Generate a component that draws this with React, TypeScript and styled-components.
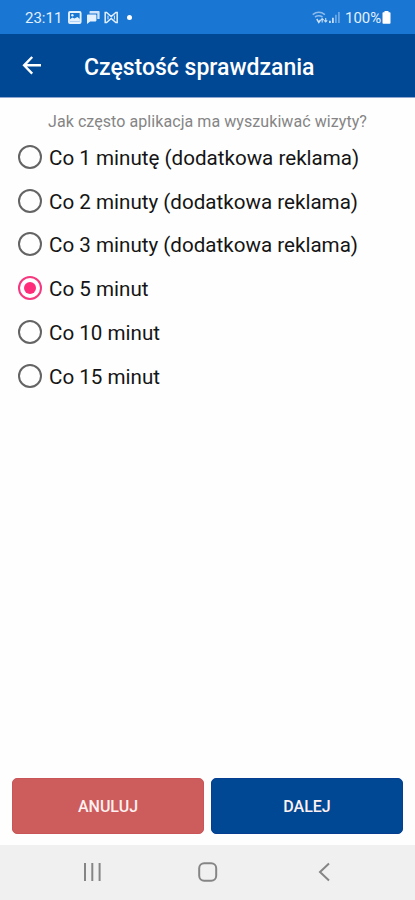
import React, { useState } from "react";
import styled, { createGlobalStyle } from "styled-components";

const GlobalStyle = createGlobalStyle`
  * { box-sizing: border-box; }
  body { margin: 0; background: #fff; font-family: Roboto, sans-serif; }
`;

const Screen = styled.div`
  display: flex;
  flex-direction: column;
  width: 415px;
  height: 900px;
  overflow: hidden;
  background: #fefefe;
`;

const StatusBar = styled.div`
  display: flex;
  align-items: center;
  justify-content: space-between;
  height: 34px;
  flex: none;
  padding: 1px 24px 0 25px;
  background: #1976d2;
  color: #e2f0ff;
  font-size: 15px;
`;

const StatusGroup = styled.div`
  display: flex;
  align-items: center;
  height: 100%;
`;

const StatusText = styled.span<{ $width: number }>`
  width: ${(p) => p.$width}px;
  white-space: nowrap;
  line-height: 18px;
`;

const StatusIcons = styled.div`
  display: flex;
  align-items: center;
  gap: 4px;
`;

const NoticeDot = styled.span`
  width: 5px;
  height: 5px;
  margin-left: 4px;
  border-radius: 50%;
  background: #fff;
`;

const AppBar = styled.header`
  display: flex;
  align-items: center;
  height: 64px;
  flex: none;
  padding: 0 0 1px 20px;
  background: #004794;
  border-bottom: 1px solid #8ea6d0;
  color: #fff;
`;

const BackButton = styled.button`
  display: flex;
  width: 24px;
  height: 24px;
  margin-right: 40px;
  padding: 0;
  border: 0;
  background: none;
  color: inherit;
`;

const Title = styled.h1`
  margin: 6px 0 0;
  font-size: 23px;
  font-weight: 500;
  line-height: 32px;
  white-space: nowrap;
`;

const Content = styled.main`
  flex: 1;
`;

const Question = styled.p`
  margin: 13px 0 0;
  text-align: center;
  color: #858585;
  font-size: 16px;
  line-height: 22px;
  letter-spacing: 0.07px;
  white-space: nowrap;
`;

const Options = styled.div`
  display: flex;
  flex-direction: column;
  margin-top: 2px;
  padding-left: 18px;
`;

const Option = styled.button`
  display: flex;
  align-items: center;
  gap: 7px;
  height: 43.8px;
  padding: 0;
  border: 0;
  background: none;
  color: #151515;
  font: 400 20.6px/28px Roboto, sans-serif;
  white-space: nowrap;
  text-align: left;
`;

const OptionLabel = styled.span`
  padding-top: 2px;
`;

const Radio = styled.span<{ $checked: boolean }>`
  display: flex;
  align-items: center;
  justify-content: center;
  width: 24px;
  height: 24px;
  border: 2px solid ${(p) => (p.$checked ? "#f5387f" : "#646464")};
  border-radius: 50%;

  &::after {
    content: "";
    width: 12px;
    height: 12px;
    border-radius: 50%;
    background: ${(p) => (p.$checked ? "#ff2b7b" : "transparent")};
  }
`;

const Actions = styled.div`
  display: flex;
  gap: 7px;
  flex: none;
  padding: 0 12px 11px;
`;

const ActionButton = styled.button<{ $color: string; $edge: string }>`
  flex: 1;
  height: 56px;
  padding: 2px 0 0;
  border: 1px solid ${(p) => p.$edge};
  border-radius: 5px;
  background: ${(p) => p.$color};
  color: #fff1f1;
  font: 500 16px/20px Roboto, sans-serif;
`;

const NavBar = styled.nav`
  display: flex;
  flex: none;
  justify-content: space-between;
  height: 55px;
  padding: 15px 79px 0 80px;
  background: #f0f0f0;
  color: #858585;
`;

const PictureIcon = () => (
  <svg width="14" height="13" viewBox="0 0 14 13">
    <rect x="1" y="1" width="11.6" height="11" rx="1" fill="#1976d2" stroke="currentColor" strokeWidth="1.9" />
    <path d="M2 10.8V8.2l2.4-1.8 2 1.2 3-1.5 2.5 2v2.7Z" fill="currentColor" />
    <circle cx="4.4" cy="4.2" r="1.2" fill="currentColor" />
  </svg>
);

const MessagesIcon = () => (
  <svg width="14" height="13" viewBox="0 0 14 13">
    <path d="M4.2 0h8.6q.8 0 .8.8V8h-2.3V2.5H3.5V.8Q3.5 0 4.2 0Z" fill="currentColor" opacity=".9" />
    <path d="M2 3.4h7.6q.8 0 .8.8v5.4q0 .8-.8.8H4.2L1 12.9V4.2q0-.8 1-.8Z" fill="currentColor" />
  </svg>
);

const BowIcon = () => (
  <svg width="15" height="13" viewBox="0 0 15 13" fill="none" stroke="currentColor">
    <path d="M1.2 1.5v10h1.4l4.6-4 4.6 4h1.4v-10h-1.4l-4.6 4-4.6-4Z" strokeWidth="1.5" />
    <path d="M4 4.6v3.8M10.4 4.6v3.8" strokeWidth="1" />
  </svg>
);

const WifiIcon = () => (
  <svg width="16" height="13" viewBox="0 0 16 13" fill="none" stroke="currentColor">
    <path d="M.7 3.6Q6.8-1 12.9 3.6M3 6q3.8-2.6 7.5 0" strokeWidth="1.6" opacity=".58" />
    <path d="m4.8 8 2 3.3L8.5 9" strokeWidth="1.5" opacity=".9" />
    <path d="M10.2 11.5v-4m-1.5 1.6 1.5-1.6 1.5 1.6M13.7 7v4m-1.5-1.6 1.5 1.6 1.5-1.6" strokeWidth="1.1" opacity=".85" />
  </svg>
);

const SignalIcon = () => (
  <svg width="17" height="13" viewBox="0 0 17 13" fill="currentColor">
    <path d="M1 12V9.7h1.8V12ZM4 12V6.8h1.8V12Z" opacity=".85" />
    <path d="M7 12V3.7h1.8V12ZM10 12V.9h1.8V12Z" opacity=".4" />
  </svg>
);

const BatteryIcon = () => (
  <svg width="9" height="13" viewBox="0 0 9 13">
    <path d="M2.5 0h4v1.2h1.2q.8 0 .8.8v10q0 .8-.8.8H1.3q-.8 0-.8-.8V2q0-.8.8-.8h1.2Z" fill="#fff" />
  </svg>
);

const choices = [
  "Co 1 minutę (dodatkowa reklama)",
  "Co 2 minuty (dodatkowa reklama)",
  "Co 3 minuty (dodatkowa reklama)",
  "Co 5 minut",
  "Co 10 minut",
  "Co 15 minut",
];

export default function App() {
  const [selected, setSelected] = useState(3);
  return (
    <Screen>
      <GlobalStyle />
      <StatusBar>
        <StatusGroup>
          <StatusText $width={43}>23:11</StatusText>
          <StatusIcons>
            <PictureIcon />
            <MessagesIcon />
            <BowIcon />
            <NoticeDot />
          </StatusIcons>
        </StatusGroup>
        <StatusGroup>
          <WifiIcon />
          <SignalIcon />
          <StatusText $width={37}>100%</StatusText>
          <BatteryIcon />
        </StatusGroup>
      </StatusBar>
      <AppBar>
        <BackButton aria-label="Wstecz">
          <svg width="24" height="24" viewBox="0 0 24 24" fill="none" stroke="currentColor" strokeWidth="2.4">
            <path d="M21 12.3H4.5M12.2 4 4.1 12.3l8.1 8.3" />
          </svg>
        </BackButton>
        <Title>Częstość sprawdzania</Title>
      </AppBar>
      <Content>
        <Question>Jak często aplikacja ma wyszukiwać wizyty?</Question>
        <Options role="radiogroup">
          {choices.map((label, i) => (
            <Option key={label} role="radio" aria-checked={selected === i} onClick={() => setSelected(i)}>
              <Radio $checked={selected === i} />
              <OptionLabel>{label}</OptionLabel>
            </Option>
          ))}
        </Options>
      </Content>
      <Actions>
        <ActionButton $color="#cd5c5c" $edge="#c95558">ANULUJ</ActionButton>
        <ActionButton $color="#004794" $edge="#063f91">DALEJ</ActionButton>
      </Actions>
      <NavBar>
        <svg width="24" height="24" viewBox="0 0 24 24" fill="none" stroke="currentColor" strokeWidth="2">
          <path d="M5 3v18M12.3 3v18M19.6 3v18" />
        </svg>
        <svg width="24" height="24" viewBox="0 0 24 24" fill="none" stroke="currentColor" strokeWidth="2">
          <rect x="3.2" y="3.2" width="17" height="17.5" rx="5" />
        </svg>
        <svg width="24" height="24" viewBox="0 0 24 24" fill="none" stroke="currentColor" strokeWidth="2">
          <path d="m17 3.5-9 8.5 9 8.5" />
        </svg>
      </NavBar>
    </Screen>
  );
}
